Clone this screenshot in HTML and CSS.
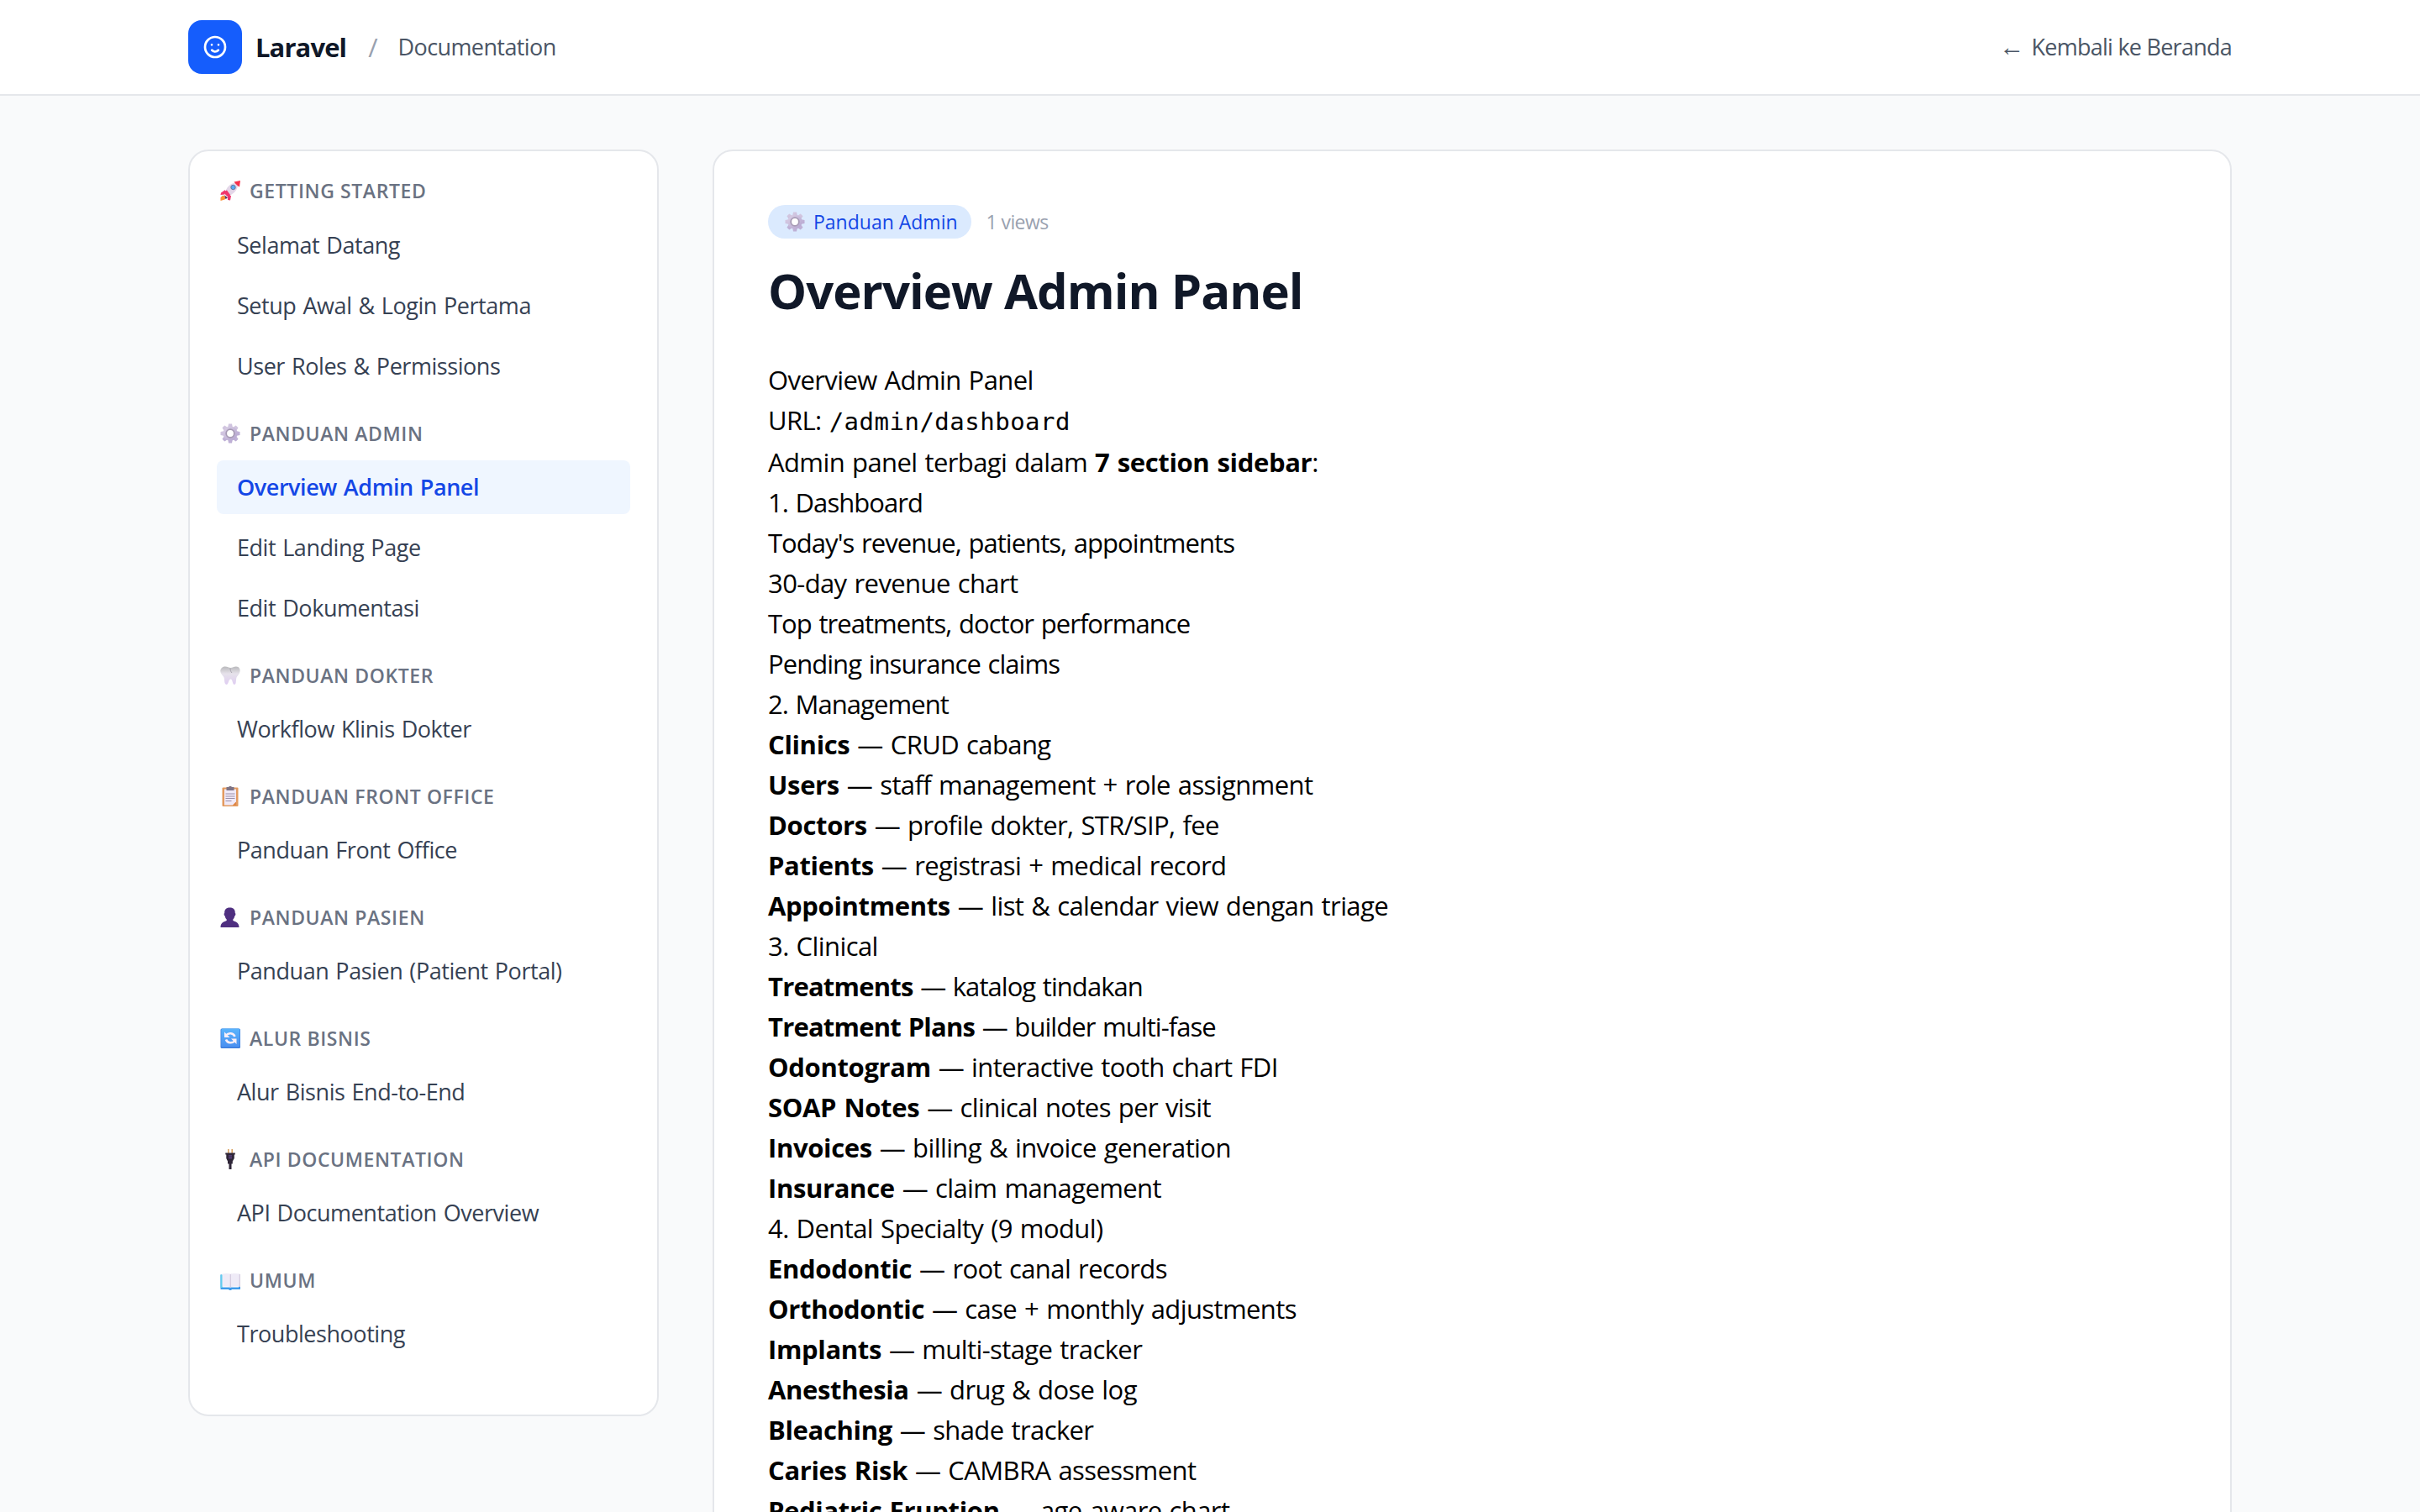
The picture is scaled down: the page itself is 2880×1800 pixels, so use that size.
FILE: index.html
```html
<!DOCTYPE html>
<html lang="id">
<head>
    <meta charset="UTF-8">
    <title>Overview Admin Panel - Laravel Documentation</title>
    <link rel="stylesheet" href="styles.css">
</head>
<body>
<!-- shared emoji icons -->
<svg class="sprite" width="0" height="0">
    <defs>
        <linearGradient id="gear-fill" x1="0" y1="0" x2="1" y2="1">
            <stop offset="0" stop-color="#dcd2e6"/>
            <stop offset="1" stop-color="#b3a3cf"/>
        </linearGradient>
        <linearGradient id="tooth-fill" x1="0" y1="0" x2="0" y2="1">
            <stop offset="0" stop-color="#b9b9bc"/>
            <stop offset="0.4" stop-color="#e6e2ea"/>
            <stop offset="1" stop-color="#dfcdf2"/>
        </linearGradient>
        <linearGradient id="blue-fill" x1="0" y1="0" x2="0" y2="1">
            <stop offset="0" stop-color="#5ab4fd"/>
            <stop offset="1" stop-color="#4a8ff0"/>
        </linearGradient>
    </defs>
    <symbol id="gear" viewBox="0 0 24 24">
        <g fill="url(#gear-fill)">
            <path d="M10 .5h4l1 5H9zM10 23.500h4l1-5H9zM.5 10v4l5 1V9zM23.500 10v4l-5 1V9z"/>
            <path d="M10 .5h4l1 5H9zM10 23.500h4l1-5H9zM.5 10v4l5 1V9zM23.500 10v4l-5 1V9z" transform="rotate(45 12 12)"/>
            <circle cx="12" cy="12" r="8.6"/>
        </g>
        <circle cx="12" cy="12" r="4.8" fill="#fff" stroke="#a79bb5" stroke-width="1.8"/>
    </symbol>
</svg>

<header class="topbar">
    <div class="topbar-inner">
        <div class="brand">
            <div class="logo">
                <svg viewBox="0 0 24 24" fill="none" stroke="#fff" stroke-width="2" stroke-linecap="round" stroke-linejoin="round">
                    <path d="M14.828 14.828a4 4 0 01-5.656 0M9 10h.01M15 10h.01M21 12a9 9 0 11-18 0 9 9 0 0118 0z"/>
                </svg>
            </div>
            <span class="brand-name">Laravel</span>
            <span class="slash">/</span>
            <span class="crumb">Documentation</span>
        </div>
        <a class="back"><span class="arrow">←</span>Kembali ke Beranda</a>
    </div>
</header>

<div class="layout">
    <aside class="sidebar">
        <section>
            <h3>
                <svg viewBox="0 0 24 24">
                    <path d="M6 11L1 14.500 .5 17l5-.5zM13 18l-1 5.500-3-.5 0-5z" fill="#f0356c"/>
                    <path d="M3.500 17.500L.5 20v4l5-1.500 2-2.500z" fill="#fb9135"/>
                    <path d="M6 13C9 6 14 2 21 2.500 22 10 17 15 10.500 18.500z" fill="#e3d6e8"/>
                    <path d="M16.500 1.500L24 0l-1 7.500c-2-1-5-3.500-6.500-6z" fill="#f8314b"/>
                    <path d="M3.500 13.500l4.500-2 4 5.500-1 4-3.500-3z" fill="#f0356c"/>
                    <path d="M5 17l4 3.500-2.500 1.500z" fill="#533566"/>
                    <circle cx="15.500" cy="8" r="2.700" fill="#55aaf4" stroke="#64789b" stroke-width="1"/>
                </svg>
                Getting Started
            </h3>
            <ul>
                <li><a>Selamat Datang</a></li>
                <li><a>Setup Awal &amp; Login Pertama</a></li>
                <li><a>User Roles &amp; Permissions</a></li>
            </ul>
        </section>
        <section>
            <h3><svg><use href="#gear"/></svg>Panduan Admin</h3>
            <ul>
                <li><a class="active">Overview Admin Panel</a></li>
                <li><a>Edit Landing Page</a></li>
                <li><a>Edit Dokumentasi</a></li>
            </ul>
        </section>
        <section>
            <h3>
                <svg viewBox="0 0 24 24">
                    <path d="M6 1.500c3 0 4 1.500 6.500 1.500S16 1.500 19 1.500c3.500 0 5 3 4.500 6-.5 3.500-3 5-4 7-1 3 0 8-2.500 8.500-2.500 0-2-6.500-4.500-6.500S10 23 7.500 23C4.500 22.500 5.500 17 4.500 14.500 3.500 12 .5 10.500.3 7 .2 4 2.500 1.500 6 1.500z" fill="url(#tooth-fill)"/>
                    <path d="M12 3.500c0 2 .5 4 2 5.500" fill="none" stroke="#aaa6b0" stroke-width="1"/>
                </svg>
                Panduan Dokter
            </h3>
            <ul>
                <li><a>Workflow Klinis Dokter</a></li>
            </ul>
        </section>
        <section>
            <h3>
                <svg viewBox="0 0 24 24">
                    <rect x="2.500" y="1.500" width="19" height="22.500" rx="1" fill="#e39a5f"/>
                    <path d="M5 3.500h14v15l-4 4H5z" fill="#f0e9f7"/>
                    <path d="M19 18.500v4h-4z" fill="#dd8446"/>
                    <rect x="7.500" y="1" width="9" height="4" fill="#7d7385"/>
                    <rect x="10.500" y="0" width="3" height="2" fill="#7d7385"/>
                    <path d="M6.500 9h11M6.500 12h11M6.500 14.500h11M6.500 17.500h7" stroke="#9a8fa8" stroke-width="1"/>
                </svg>
                Panduan Front Office
            </h3>
            <ul>
                <li><a>Panduan Front Office</a></li>
            </ul>
        </section>
        <section>
            <h3>
                <svg viewBox="0 0 24 24">
                    <path d="M11.500 .5c4.500 0 6.500 2.500 6.300 6.500 1 .3.700 3-.5 3.500-.4 2-1 3-2 4v1.500c3 1 7.200 2.500 7.200 8H.5c0-5.500 4.200-7 7.200-8v-1.500c-1-1-1.600-2-2-4-1.200-.5-1.500-3.200-.5-3.500C5 3 7 .5 11.500.5z" fill="#4f2f80"/>
                </svg>
                Panduan Pasien
            </h3>
            <ul>
                <li><a>Panduan Pasien (Patient Portal)</a></li>
            </ul>
        </section>
        <section>
            <h3>
                <svg viewBox="0 0 24 24">
                    <rect x="0.500" y="0.500" width="23.500" height="23.500" rx="1.500" fill="#3d7ddc"/>
                    <rect x="1.300" y="0.500" width="22" height="22" rx="1.500" fill="url(#blue-fill)"/>
                    <path d="M7 8.500c3-3.500 9-3 10.500 1.500M17.500 15c-3 3.500-9 3-10.500-1.500" fill="none" stroke="#fbeff8" stroke-width="2.600"/>
                    <path d="M5 4.500v6.500h6.500zM19.500 19v-6.500H13z" fill="#fbeff8"/>
                </svg>
                Alur Bisnis
            </h3>
            <ul>
                <li><a>Alur Bisnis End-to-End</a></li>
            </ul>
        </section>
        <section>
            <h3>
                <svg viewBox="0 0 24 24">
                    <path d="M9.800 0v5M14.200 0v5" stroke="#d9a263" stroke-width="1.600"/>
                    <path d="M6.300 4.500h11.500v2h-1v4.500l-2 3.500v3h-1.300V24h-3v-6.500H9v-3L7.300 11V6.500h-1z" fill="#2f2638"/>
                    <path d="M10 8h4M10 10.500h4" stroke="#7450a8" stroke-width="1.200"/>
                </svg>
                API Documentation
            </h3>
            <ul>
                <li><a>API Documentation Overview</a></li>
            </ul>
        </section>
        <section>
            <h3>
                <svg viewBox="0 0 24 24">
                    <path d="M.5 5.500h1.500v15h20v-2h2V23H14l-1 1h-2l-1-1H.5z" fill="#3f9bea"/>
                    <path d="M.5 5.500H3V21H.5z" fill="#62cdee"/>
                    <path d="M2.500 4.500c3-.8 7-.8 9.700 0 2.700-.8 7.500-.8 11.500 0v15.500c-4-.6-9-.6-11.500.5-2.500-1.100-6.500-1.100-9.700-.5z" fill="#efebf7"/>
                    <path d="M12.300 5v15.500M23.300 5v15" stroke="#d3cadd" stroke-width="1.200"/>
                </svg>
                Umum
            </h3>
            <ul>
                <li><a>Troubleshooting</a></li>
            </ul>
        </section>
    </aside>

    <main class="article">
        <div class="meta">
            <span class="badge"><svg><use href="#gear"/></svg>Panduan Admin</span>
            <span class="views">1 views</span>
        </div>
        <h1>Overview Admin Panel</h1>
        <div class="content">
            <p>Overview Admin Panel</p>
            <p>URL: <code>/admin/dashboard</code></p>
            <p>Admin panel terbagi dalam <strong>7 section sidebar</strong>:</p>
            <p class="tight">1. Dashboard</p>
            <p class="tight">Today's revenue, patients, appointments</p>
            <p>30-day revenue chart</p>
            <p class="tight">Top treatments, doctor performance</p>
            <p class="tight">Pending insurance claims</p>
            <p class="tight">2. Management</p>
            <p><strong>Clinics</strong> — CRUD cabang</p>
            <p><strong>Users</strong> — staff management + role assignment</p>
            <p><strong>Doctors</strong> — profile dokter, STR/SIP, fee</p>
            <p><strong>Patients</strong> — registrasi + medical record</p>
            <p><strong>Appointments</strong> — list &amp; calendar view dengan triage</p>
            <p>3. Clinical</p>
            <p class="tight"><strong>Treatments</strong> — katalog tindakan</p>
            <p class="tight"><strong>Treatment Plans</strong> — builder multi-fase</p>
            <p><strong>Odontogram</strong> — interactive tooth chart FDI</p>
            <p><strong>SOAP Notes</strong> — clinical notes per visit</p>
            <p><strong>Invoices</strong> — billing &amp; invoice generation</p>
            <p><strong>Insurance</strong> — claim management</p>
            <p>4. Dental Specialty (9 modul)</p>
            <p><strong>Endodontic</strong> — root canal records</p>
            <p><strong>Orthodontic</strong> — case + monthly adjustments</p>
            <p><strong>Implants</strong> — multi-stage tracker</p>
            <p><strong>Anesthesia</strong> — drug &amp; dose log</p>
            <p><strong>Bleaching</strong> — shade tracker</p>
            <p><strong>Caries Risk</strong> — CAMBRA assessment</p>
            <p><strong>Pediatric Eruption</strong> — age-aware chart</p>
        </div>
    </main>
</div>
</body>
</html>
```
FILE: styles.css
```css
* {
    box-sizing: border-box;
    margin: 0;
    padding: 0;
}

body {
    height: 100vh;
    overflow: hidden;
    background: #f9fafb;
    font-family: "Open Sans", "Noto Sans", sans-serif;
    font-size: 31px;
    line-height: 48px;
    color: #000;
}

.sprite {
    position: absolute;
}

/* top bar */
.topbar {
    background: #fff;
    border-bottom: 2px solid #e5e7eb;
}

.topbar-inner {
    display: flex;
    justify-content: space-between;
    align-items: center;
    width: 2432px;
    margin: 0 auto;
    padding: 24px 0;
}

.brand {
    display: flex;
    align-items: center;
    height: 64px;
}

.logo {
    display: flex;
    align-items: center;
    justify-content: center;
    width: 64px;
    height: 64px;
    margin-right: 16px;
    border-radius: 16px;
    background: #155dfc;
}

.logo svg {
    width: 32px;
    height: 32px;
}

.brand-name {
    font-weight: 700;
    letter-spacing: -0.9px;
    color: #101828;
}

.slash {
    margin: 0 24px 0 26px;
    color: #99a1af;
}

.crumb, .back {
    font-size: 27px;
    line-height: 40px;
    letter-spacing: -0.6px;
    color: #4a5565;
}

.back {
    letter-spacing: -0.75px;
}

.arrow {
    margin-right: 9px;
    font-size: 30px;
    line-height: 32px;
}

/* page columns */
.layout {
    display: grid;
    grid-template-columns: 560px 1fr;
    gap: 64px;
    align-items: start;
    width: 2432px;
    margin: 0 auto;
    padding: 64px 0;
}

.sidebar, .article {
    background: #fff;
    border: 2px solid #e5e7eb;
    border-radius: 24px;
}

.sidebar {
    padding: 31px 32px 32px;
}

.sidebar section {
    margin-bottom: 32px;
}

.sidebar h3 {
    display: flex;
    align-items: center;
    gap: 11px;
    margin-bottom: 16px;
    padding-left: 4px;
    font-size: 23px;
    line-height: 32px;
    font-weight: 600;
    letter-spacing: 0.6px;
    text-transform: uppercase;
    color: #6a7282;
}

.sidebar h3 svg, .badge svg {
    width: 24px;
    height: 24px;
}

.sidebar ul {
    display: flex;
    flex-direction: column;
    gap: 8px;
    list-style: none;
}

.sidebar section:first-child h3 {
    margin-bottom: 17px;
}

.sidebar a {
    display: block;
    padding: 12px 24px;
    border-radius: 8px;
    font-size: 27px;
    line-height: 40px;
    letter-spacing: -0.45px;
    word-spacing: 1.5px;
    color: #364153;
}

.sidebar a.active {
    background: #eff6ff;
    font-weight: 600;
    color: #1447e6;
}

/* article */
.article {
    padding: 64px;
}

.meta {
    display: flex;
    align-items: center;
    gap: 18px;
    margin-bottom: 26px;
    font-size: 23px;
    line-height: 32px;
}

.badge {
    display: flex;
    align-items: center;
    gap: 10px;
    padding: 4px 16px 4px 20px;
    border-radius: 20px;
    background: #dbeafe;
    color: #1447e6;
}

.views {
    letter-spacing: -0.6px;
    color: #99a1af;
}

h1 {
    margin-bottom: 46px;
    font-size: 58px;
    line-height: 72px;
    font-weight: 700;
    letter-spacing: -0.95px;
    color: #101828;
}

.content {
    letter-spacing: -0.6px;
    word-spacing: 1.5px;
}

.content .tight {
    letter-spacing: -0.95px;
}

.content strong {
    letter-spacing: -0.35px;
}

.content .tight strong {
    letter-spacing: -0.8px;
}

.content code {
    font-family: "DejaVu Sans Mono", monospace;
    font-size: 29px;
    letter-spacing: 0.5px;
}
```
